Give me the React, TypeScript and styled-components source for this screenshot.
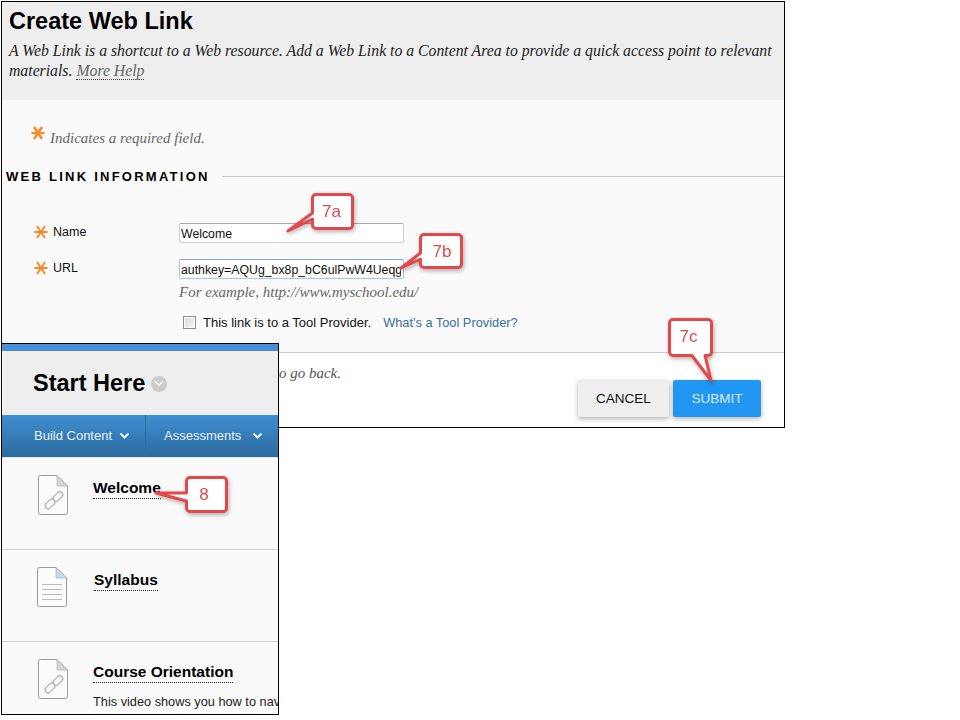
import styled, { createGlobalStyle } from 'styled-components';

const GlobalStyle = createGlobalStyle`
  html, body { margin: 0; padding: 0; background: #fff; }
  body { font-family: "Liberation Sans", Arial, sans-serif; color: #000; }
`;

const Star = ({ size = 14, weight = 2 }: { size?: number; weight?: number }) => (
  <StarIcon width={size} height={size} viewBox="0 0 14 14" $size={size}>
    <g stroke="#f58a2c" strokeWidth={weight} strokeLinecap="butt">
      <line x1="0.5" y1="7" x2="13.5" y2="7" />
      <line x1="3" y1="1" x2="11" y2="13" />
      <line x1="11" y1="1" x2="3" y2="13" />
    </g>
  </StarIcon>
);

const DocShape = ({ lined }: { lined?: boolean }) => (
  <DocIcon width="30" height="40" viewBox="0 0 30 40">
    <path d="M2.500 .5h16.500L29.500 11v26.500a2 2 0 0 1-2 2h-25a2 2 0 0 1-2-2v-35a2 2 0 0 1 2-2z" fill="#fbfbfb" stroke="#9a9a9a" />
    <path d="M19 .5V11h10.500z" fill={lined ? '#c9d9ec' : '#d6d6d6'} stroke="#a8a8a8" strokeWidth="0.6" />
    {lined ? (
      <g stroke="#bbbbbb">
        <line x1="5" y1="17.500" x2="25" y2="17.500" />
        <line x1="5" y1="22.500" x2="25" y2="22.500" />
        <line x1="5" y1="27.500" x2="25" y2="27.500" />
        <line x1="5" y1="32.500" x2="25" y2="32.500" />
      </g>
    ) : (
      <g fill="none" stroke="#b4b4b4" strokeWidth="1.3">
        <rect x="14.500" y="18.500" width="11" height="6" rx="3" transform="rotate(-45 20 21.500)" />
        <rect x="6.500" y="26" width="11" height="6" rx="3" transform="rotate(-45 12 29)" />
      </g>
    )}
  </DocIcon>
);

const Chevron = () => (
  <ChevronIcon width="11" height="8" viewBox="0 0 11 8">
    <path d="M1.500 1.500l4 4 4-4" fill="none" stroke="#f0f5fa" strokeWidth="2" />
  </ChevronIcon>
);

type CalloutProps = {
  label: string;
  left: number;
  top: number;
  width: number;
  height: number;
  d: string;
  boxLeft: number;
  boxTop: number;
  boxWidth: number;
  boxHeight: number;
};

const Callout = ({ label, left, top, width, height, d, boxLeft, boxTop, boxWidth, boxHeight }: CalloutProps) => (
  <CalloutWrap $left={left} $top={top} $width={width} $height={height}>
    <svg width={width} height={height} viewBox={`${left} ${top} ${width} ${height}`}>
      <path d={d} fill="#fff" stroke="#e5484a" strokeWidth="3" strokeLinejoin="round" />
    </svg>
    <CalloutLabel $left={boxLeft - left} $top={boxTop - top} $width={boxWidth} $height={boxHeight}>
      {label}
    </CalloutLabel>
  </CalloutWrap>
);

const courseItems = [
  { title: 'Welcome', lined: false, text: '', pad: 36, gap: 25 },
  { title: 'Syllabus', lined: true, text: '', pad: 35, gap: 27 },
  { title: 'Course Orientation', lined: false, text: 'This video shows you how to navigate the course', pad: 36, gap: 25 },
];

export default function App() {
  return (
    <Page>
      <GlobalStyle />
      <FormWindow>
        <PageHeader>
          <Title>Create Web Link</Title>
          <Intro>
            A Web Link is a shortcut to a Web resource. Add a Web Link to a Content Area to provide a quick access point to relevant
            materials. <MoreHelp>More Help</MoreHelp>
          </Intro>
        </PageHeader>
        <FormBody>
          <RequiredNote>
            <Star size={14} weight={2.4} />
            <RequiredText>Indicates a required field.</RequiredText>
          </RequiredNote>
          <SectionHead>
            <SectionTitle>WEB LINK INFORMATION</SectionTitle>
            <SectionRule />
          </SectionHead>
          <Field $mb={16}>
            <FieldLabel><Star /> Name</FieldLabel>
            <TextBox readOnly value="Welcome" />
          </Field>
          <Field $mb={0}>
            <FieldLabel><Star /> URL</FieldLabel>
            <TextBox $focus readOnly value="authkey=AQUg_bx8p_bC6ulPwW4Ueqg" />
          </Field>
          <Hint>For example, http://www.myschool.edu/</Hint>
          <CheckRow>
            <FakeCheck />
            <CheckText>This link is to a Tool Provider.</CheckText>
            <HelpLink>What's a Tool Provider?</HelpLink>
          </CheckRow>
        </FormBody>
        <Footer>
          <FooterNote>Click Submit to proceed. Click Cancel to go back.</FooterNote>
          <Buttons>
            <CancelButton>CANCEL</CancelButton>
            <SubmitButton>SUBMIT</SubmitButton>
          </Buttons>
        </Footer>
      </FormWindow>

      <CourseWindow>
        <Banner>
          <svg width="276" height="8" viewBox="0 0 276 8">
            <path d="M0 6C60 2 130 1 170 3S240 7 276 5" fill="none" stroke="#8fbdec" strokeWidth="1" />
          </svg>
        </Banner>
        <CourseHead>
          <CourseTitle>Start Here</CourseTitle>
          <TitleMenu>
            <svg width="10" height="7" viewBox="0 0 10 7">
              <path d="M1 1.500l4 3.500 4-3.500" fill="none" stroke="#fff" strokeWidth="1.6" />
            </svg>
          </TitleMenu>
        </CourseHead>
        <ActionBar>
          <ActionItem $width={143} $pad={32} $gap={7}>Build Content <Chevron /></ActionItem>
          <ActionItem $width={133} $pad={18} $gap={11}>Assessments <Chevron /></ActionItem>
        </ActionBar>
        {courseItems.map((item) => (
          <CourseRow key={item.title} $pad={item.pad}>
            <DocShape lined={item.lined} />
            <RowBody $gap={item.gap}>
              <RowTitle>{item.title}</RowTitle>
              {item.text && <RowText>{item.text}</RowText>}
            </RowBody>
          </CourseRow>
        ))}
      </CourseWindow>

      <Callout
        label="7a" left={284} top={191} width={72} height={43}
        boxLeft={312} boxTop={194} boxWidth={39} boxHeight={36}
        d="M316 194.500h33a3.500 3.500 0 0 1 3.500 3.500v27a3.500 3.500 0 0 1-3.500 3.500h-33a3.500 3.500 0 0 1-3.500-3.500v-6L288 231l24.500-18v-15a3.500 3.500 0 0 1 3.500-3.500z"
      />
      <Callout
        label="7b" left={398} top={231} width={67} height={40}
        boxLeft={420} boxTop={234} boxWidth={44} boxHeight={36}
        d="M424 234.500h34a3.500 3.500 0 0 1 3.500 3.500v26a3.500 3.500 0 0 1-3.500 3.500h-34a3.500 3.500 0 0 1-3.500-3.500v-5L401 268l19.500-15v-15a3.500 3.500 0 0 1 3.500-3.500z"
      />
      <Callout
        label="7c" left={666} top={316} width={49} height={67}
        boxLeft={669} boxTop={319} boxWidth={39} boxHeight={36}
        d="M673 319.500h35a3.500 3.500 0 0 1 3.500 3.500v29a3.500 3.500 0 0 1-3.500 3.500h-3l6 25-19-25h-19a3.500 3.500 0 0 1-3.500-3.500v-29a3.500 3.500 0 0 1 3.500-3.500z"
      />
      <Callout
        label="8" left={153} top={474} width={77} height={41}
        boxLeft={186} boxTop={477} boxWidth={36} boxHeight={36}
        d="M190 477.500h33a3.500 3.500 0 0 1 3.500 3.500v27a3.500 3.500 0 0 1-3.500 3.500h-33a3.500 3.500 0 0 1-3.500-3.500v-7L156 493l30.500 0v-12a3.500 3.500 0 0 1 3.500-3.500z"
      />
    </Page>
  );
}

const Page = styled.div`
  position: relative;
  width: 960px;
  height: 720px;
  padding: 1px;
  box-sizing: border-box;
  overflow: hidden;
`;

const FormWindow = styled.section`
  width: 784px;
  height: 427px;
  box-sizing: border-box;
  border: 1px solid #000;
  background: #fafafa;
  display: flex;
  flex-direction: column;
`;

const PageHeader = styled.header`
  height: 98px;
  box-sizing: border-box;
  padding: 5px 8px 0 7px;
  background: #eeeeee;
`;

const Title = styled.h1`
  margin: 0;
  font-size: 23.5px;
  line-height: 28px;
  font-weight: 700;
  color: #000;
`;

const Intro = styled.p`
  margin: 6px 0 0;
  font-family: "Liberation Serif", serif;
  font-style: italic;
  font-size: 15.75px;
  line-height: 20px;
  color: #222;
`;

const MoreHelp = styled.span`
  color: #666;
  border-bottom: 1px dotted #444;
`;

const FormBody = styled.div`
  flex: 1;
  padding-top: 26px;
`;

const RequiredNote = styled.div`
  display: flex;
  align-items: flex-start;
  padding-left: 29px;
  height: 40px;
`;

const RequiredText = styled.span`
  margin: 4px 0 0 5px;
  font-family: "Liberation Serif", serif;
  font-style: italic;
  font-size: 15px;
  color: #666;
`;

const StarIcon = styled.svg<{ $size: number }>`
  flex: none;
  vertical-align: middle;
  width: ${(p) => p.$size}px;
`;

const SectionHead = styled.div`
  display: flex;
  align-items: center;
  padding-left: 4px;
  height: 20px;
  margin-bottom: 37px;
`;

const SectionTitle = styled.h2`
  margin: 0;
  font-size: 13px;
  font-weight: 700;
  letter-spacing: 2.25px;
  color: #000;
  white-space: nowrap;
`;

const SectionRule = styled.div`
  flex: 1;
  margin-left: 12px;
  height: 1px;
  background: #c8c8c8;
`;

const Field = styled.div<{ $mb: number }>`
  display: flex;
  margin-bottom: ${(p) => p.$mb}px;
  padding-left: 32px;
`;

const FieldLabel = styled.label`
  width: 145px;
  display: flex;
  gap: 5px;
  align-items: center;
  font-size: 12.5px;
  height: 18px;
  color: #111;
`;

const TextBox = styled.input<{ $focus?: boolean }>`
  width: 225px;
  height: 20px;
  box-sizing: border-box;
  padding: 1px 2px 0 1px;
  border: 1px solid ${(p) => (p.$focus ? '#a9c4de' : '#d0d0d0')};
  border-top-color: ${(p) => (p.$focus ? '#7ea6cc' : '#a8a8a8')};
  border-radius: 2px;
  background: #fff;
  font-family: "Liberation Sans", Arial, sans-serif;
  font-size: 12.3px;
  color: #111;
  outline: none;
`;

const Hint = styled.div`
  margin: 4px 0 0 177px;
  font-family: "Liberation Serif", serif;
  font-style: italic;
  font-size: 15px;
  line-height: 18px;
  color: #666;
`;

const CheckRow = styled.div`
  display: flex;
  align-items: center;
  margin: 14px 0 0 181px;
  font-size: 13px;
`;

const FakeCheck = styled.span`
  width: 11px;
  height: 11px;
  border: 1px solid #8e8e8e;
  background: linear-gradient(135deg, #d8d8d8, #f4f4f4);
  box-shadow: inset 0 0 0 1px #fff;
  margin-right: 7px;
`;

const CheckText = styled.span`
  color: #111;
`;

const HelpLink = styled.span`
  margin-left: 12px;
  font-size: 12.8px;
  color: #3a6f9f;
`;

const Footer = styled.footer`
  height: 75px;
  box-sizing: border-box;
  border-top: 1px solid #cccccc;
  background: #fff;
  position: relative;
  padding: 27px 23px 0 0;
  display: flex;
  justify-content: flex-end;
`;

const FooterNote = styled.span`
  position: absolute;
  right: 443px;
  top: 12px;
  font-family: "Liberation Serif", serif;
  font-style: italic;
  font-size: 15px;
  white-space: nowrap;
  color: #555;
`;

const Buttons = styled.div`
  display: flex;
  gap: 4px;
`;

const CancelButton = styled.button`
  width: 91px;
  height: 37px;
  border: 0;
  border-radius: 2px;
  background: #eeeeee;
  box-shadow: 0 2px 5px rgba(0, 0, 0, 0.3);
  font-family: "Liberation Sans", Arial, sans-serif;
  font-size: 13.5px;
  color: #111;
`;

const SubmitButton = styled(CancelButton)`
  width: 88px;
  background: #2196f3;
  color: #d8ecfc;
`;

const CourseWindow = styled.section`
  position: absolute;
  left: 1px;
  top: 343px;
  width: 278px;
  height: 372px;
  box-sizing: border-box;
  border: 1px solid #000;
  background: #fafafa;
  overflow: hidden;
`;

const Banner = styled.div`
  height: 7px;
  overflow: hidden;
  background: #4a90d9;
`;

const CourseHead = styled.div`
  height: 64px;
  box-sizing: border-box;
  display: flex;
  align-items: center;
  margin-left: 1px;
  padding: 1px 0 0 30px;
  background: #eeeeee;
  border-radius: 3px 0 0 0;
`;

const CourseTitle = styled.h2`
  margin: 0;
  font-size: 23.5px;
  font-weight: 700;
  color: #000;
`;

const TitleMenu = styled.span`
  width: 16px;
  height: 16px;
  margin-left: 6px;
  border-radius: 50%;
  background: #cccccc;
  display: flex;
  align-items: center;
  justify-content: center;
`;

const ActionBar = styled.nav`
  height: 43px;
  box-sizing: border-box;
  padding-bottom: 1px;
  display: flex;
  background: linear-gradient(#3f8fd2, #2b6a9e);
  border-bottom: 1px solid #dfe7ee;
`;

const ActionItem = styled.div<{ $width: number; $pad: number; $gap: number }>`
  width: ${(p) => p.$width}px;
  padding-left: ${(p) => p.$pad}px;
  box-sizing: border-box;
  display: flex;
  align-items: center;
  gap: ${(p) => p.$gap}px;
  font-size: 13px;
  white-space: nowrap;
  color: #e6eff7;
  & + & {
    border-left: 1px solid #2d6fa6;
  }
`;

const CourseRow = styled.article<{ $pad: number }>`
  height: 92px;
  box-sizing: border-box;
  display: flex;
  padding: 17px 0 0 ${(p) => p.$pad}px;
  border-bottom: 1px solid #cfcfcf;
  &:last-child {
    border-bottom: 0;
  }
`;

const DocIcon = styled.svg`
  flex: none;
`;

const ChevronIcon = styled.svg`
  flex: none;
`;

const RowBody = styled.div<{ $gap: number }>`
  margin-left: ${(p) => p.$gap}px;
  padding-top: 3px;
  min-width: 0;
  flex: 1;
  overflow: hidden;
`;

const RowTitle = styled.span`
  display: inline-block;
  font-size: 15.5px;
  line-height: 20px;
  font-weight: 700;
  color: #000;
  border-bottom: 1px dotted #222;
`;

const RowText = styled.div`
  margin-top: 11px;
  font-size: 12.75px;
  color: #222;
  white-space: nowrap;
`;

const CalloutWrap = styled.div<{ $left: number; $top: number; $width: number; $height: number }>`
  position: absolute;
  left: ${(p) => p.$left}px;
  top: ${(p) => p.$top}px;
  width: ${(p) => p.$width}px;
  height: ${(p) => p.$height}px;
  filter: drop-shadow(1px 2px 2px rgba(0, 0, 0, 0.3));
  svg {
    display: block;
  }
`;

const CalloutLabel = styled.span<{ $left: number; $top: number; $width: number; $height: number }>`
  position: absolute;
  left: ${(p) => p.$left}px;
  top: ${(p) => p.$top}px;
  width: ${(p) => p.$width}px;
  height: ${(p) => p.$height}px;
  display: flex;
  align-items: center;
  justify-content: center;
  font-size: 17px;
  color: #e5484a;
`;
